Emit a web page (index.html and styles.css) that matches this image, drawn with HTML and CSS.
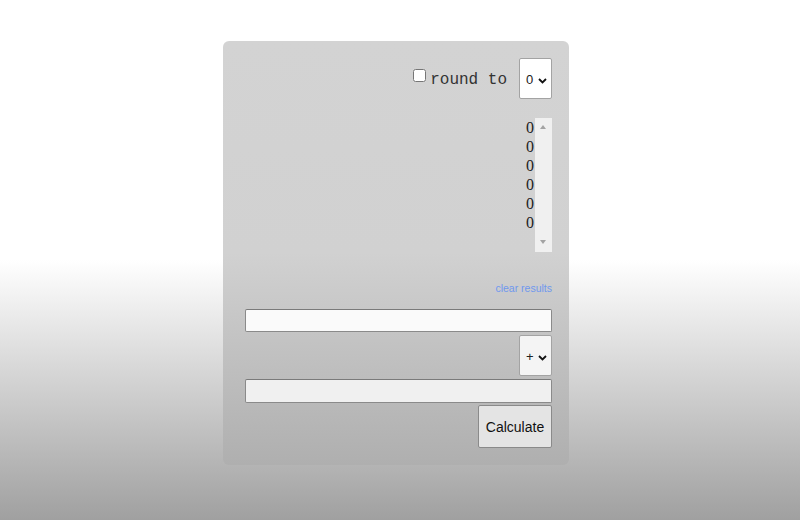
FILE: index.html
```html
<!DOCTYPE html>
<html>
<head>
<meta charset="utf-8">
<link rel="stylesheet" href="styles.css">
</head>
<body>
<div class="calc">
  <div class="round-row">
    <input type="checkbox" class="round-check">
    <span class="round-label">round to</span>
    <div class="sel-wrap">
      <select class="sel"><option>0</option></select>
      <svg class="chev" width="9" height="6" viewBox="0 0 9 6"><path d="M1 1 L4.5 4.5 L8 1" fill="none" stroke="#111" stroke-width="1.8"/></svg>
    </div>
  </div>
  <div class="results-wrap">
    <div class="results">
      <div>0</div><div>0</div><div>0</div><div>0</div><div>0</div><div>0</div>
    </div>
    <div class="scrollbar">
      <span class="arr up"></span>
      <span class="arr down"></span>
    </div>
  </div>
  <div class="clear-row"><a class="clear" href="#">clear results</a></div>
  <input type="text" class="num num-a">
  <div class="op-row">
    <div class="sel-wrap">
      <select class="sel op"><option>+</option></select>
      <svg class="chev" width="9" height="6" viewBox="0 0 9 6"><path d="M1 1 L4.5 4.5 L8 1" fill="none" stroke="#111" stroke-width="1.8"/></svg>
    </div>
  </div>
  <input type="text" class="num num-b">
  <div class="btn-row"><button class="calc-btn">Calculate</button></div>
</div>
</body>
</html>
```

FILE: styles.css
```css
html, body {
  margin: 0;
  height: 100%;
}
body {
  background: linear-gradient(to bottom, #ffffff 0%, #ffffff 50%, #a0a0a0 100%);
  font-family: "Liberation Sans", Arial, sans-serif;
  overflow: hidden;
}
.calc {
  box-sizing: border-box;
  width: 346px;
  height: 424px;
  margin: 41px 0 0 223px;
  padding: 17px 17px 16px 22px;
  border-radius: 6px;
  background: linear-gradient(to bottom, #d3d3d3 0%, #d1d1d1 50%, #afafaf 100%);
  display: flex;
  flex-direction: column;
}
.round-row {
  display: flex;
  justify-content: flex-end;
  align-items: center;
  height: 41px;
}
.round-check {
  width: 13px;
  height: 13px;
  margin: 0 4px 0 0;
  transform: translateY(-3px);
}
.round-label {
  font-family: "Liberation Mono", "Courier New", monospace;
  font-size: 16px;
  color: #333;
  margin-right: 12px;
  position: relative;
  top: 1px;
}
.sel-wrap {
  position: relative;
  width: 33px;
  height: 41px;
}
.sel {
  -webkit-appearance: none;
  appearance: none;
  box-sizing: border-box;
  width: 33px;
  height: 41px;
  font-family: "Liberation Sans", Arial, sans-serif;
  font-size: 13px;
  background: #fff;
  border: 1px solid #a3a3a3;
  border-radius: 2px;
  padding: 2px 0 0 6px;
  color: #222;
  margin: 0;
}
.chev {
  position: absolute;
  left: 19px;
  top: 20px;
  pointer-events: none;
}
.results-wrap {
  display: flex;
  justify-content: flex-end;
  margin-top: 19px;
  height: 134px;
}
.results {
  font-family: "Liberation Serif", "Times New Roman", serif;
  font-size: 16px;
  line-height: 19px;
  color: #222;
  padding-right: 1px;
  text-align: right;
}
.scrollbar {
  width: 17px;
  height: 134px;
  background: #f0f0f0;
  position: relative;
}
.arr {
  position: absolute;
  left: 5px;
  width: 0;
  height: 0;
  border-left: 3.5px solid transparent;
  border-right: 3.5px solid transparent;
}
.arr.up {
  top: 7px;
  border-bottom: 4px solid #a3a3a3;
}
.arr.down {
  bottom: 8px;
  border-top: 4px solid #a3a3a3;
}
.clear-row {
  display: flex;
  justify-content: flex-end;
  margin-top: 30px;
  height: 12px;
  line-height: 12px;
}
.clear {
  font-size: 10.5px;
  color: #6f98ee;
  text-decoration: none;
}
.num {
  box-sizing: border-box;
  width: 307px;
  height: 23px;
  border: 1px solid #8a8a8a;
  border-top-color: #7a7a7a;
  border-radius: 2px;
  padding: 0 4px;
  margin: 0;
}
.num-a {
  margin-top: 15px;
  background: #fafafa;
}
.num-b {
  background: #f0f0f0;
  margin-top: 3px;
  height: 24px;
}
.op-row {
  display: flex;
  justify-content: flex-end;
  margin-top: 3px;
}
.op {
  background: #f4f4f4;
}
.btn-row {
  display: flex;
  justify-content: flex-end;
  margin-top: 2px;
}
.calc-btn {
  box-sizing: border-box;
  width: 74px;
  height: 43px;
  font-family: "Liberation Sans", Arial, sans-serif;
  font-size: 14px;
  color: #111;
  background: #e4e4e4;
  border: 1px solid #8a8a8a;
  border-radius: 2px;
  padding: 0;
}
```
